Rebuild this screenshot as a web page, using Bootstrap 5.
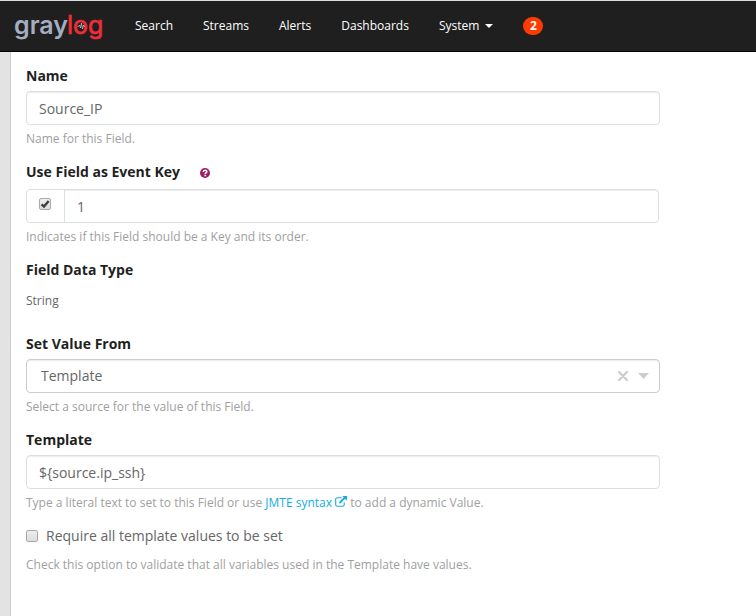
<!DOCTYPE html>
<html lang="en">
<head>
<meta charset="utf-8">
<meta name="viewport" content="width=device-width, initial-scale=1">
<title>Graylog - Event Definition Fields</title>
<link href="https://cdn.jsdelivr.net/npm/bootstrap@5.3.0/dist/css/bootstrap.min.css" rel="stylesheet">
<style>
body { font-family: "Open Sans", "Noto Sans", sans-serif; font-size: 12px; line-height: 18px; color: #666; background: #e3e3e3; }
.topbar { height: 52px; padding: 0 15px; background: #1f1f1f; border-top: 1px solid #d9dfdf; border-bottom: 1px solid #000; }
.topbar .navbar-nav { gap: 30px; margin-left: 30px; }
.topbar .navbar-nav .nav-link { padding: 0; color: #fff; font-size: 12px; line-height: 18px; }
.topbar .dropdown-toggle::after { margin-left: 6px; border-width: 4px 4px 0; vertical-align: 2px; }
.logo-text { font-family: Inter, sans-serif; font-size: 25px; }
.logo-gray { font-weight: 600; }
.logo-red { font-weight: 400; stroke-width: .7px; }
.alert-count { min-width: 20px; height: 18px; line-height: 18px; padding: 0; font-size: 12px; background: #ff3b00; margin-left: 30px; }
.panel { margin-left: 10px; padding: 14px 96px 15px 15px; border-left: 1px solid #ccc; }
.field { margin-bottom: 15px; }
.field-label { display: block; margin: 0 0 5px; font-size: 14px; line-height: 20px; font-weight: 700; color: #1f1f1f; }
.key-label { margin-bottom: 7px; gap: 20px; }
.help { margin: 5px 0 0; line-height: 17px; color: #a0a0a0; }
.help a { color: #16ace3; text-decoration: none; }
.field .form-control, .picker select { height: 34px; padding: 6px 12px; font-size: 14px; line-height: 20px; color: #666; border: 1px solid #dbe0e5; border-radius: 4px; box-shadow: inset 0 1px 1px rgba(0,0,0,.075); }
.picker select { width: 100%; appearance: none; padding: 6px 14px; background: #fff; border-color: #ccc; }
.picker-tools { top: 0; right: 11px; height: 34px; gap: 10px; color: #ccc; }
.picker-tools button { line-height: 0; color: inherit; }
.key-row { padding-right: 1px; }
.key-row .input-group-text { width: 39px; padding: 0 12px 4px; background: #fff; border: 1px solid #dbe0e5; border-radius: 4px; }
.key-row .form-control { border-radius: 0 4px 4px 0; }
.tick { appearance: none; flex: none; width: 12px; height: 12px; margin: 0; border: 1px solid #aaa; border-radius: 2px; background: linear-gradient(#eee, #dcdcdc); }
.tick:checked { background: url("data:image/svg+xml,%3Csvg xmlns='http://www.w3.org/2000/svg' viewBox='0 0 10 10'%3E%3Cpath d='M1.5 5.3 4 7.6 8.7 2' fill='none' stroke='%23404040' stroke-width='2.4'/%3E%3C/svg%3E") center / 10px no-repeat, linear-gradient(#eee, #dcdcdc); }
.type-value { margin: 12px 0 0; padding-bottom: 9px; }
.require-row { gap: 8px; font-size: 14px; line-height: 20px; }
.require-help { margin-top: 10px; }
</style>
</head>
<body class="d-flex flex-column min-vh-100">
<nav class="topbar navbar navbar-expand flex-nowrap" data-bs-theme="dark">
  <a href="#" class="d-block lh-1" aria-label="Graylog">
    <svg class="d-block overflow-visible" width="90" height="34" viewBox="0 0 90 34">
      <text class="logo-text logo-gray" x="-1" y="25" fill="#a5adc0">gray</text>
      <text class="logo-text logo-red" x="52" y="25" fill="#ef2d36" stroke="#ef2d36">log</text>
      <path d="M62.500 17.500h1l1-1.500 1 3 1-5 1 6 1-4 .6 1.500h.6" fill="none" stroke="#c8ccd6" stroke-width=".7"/>
    </svg>
  </a>
  <ul class="navbar-nav">
    <li class="nav-item"><a class="nav-link" href="#">Search</a></li>
    <li class="nav-item"><a class="nav-link" href="#">Streams</a></li>
    <li class="nav-item"><a class="nav-link" href="#">Alerts</a></li>
    <li class="nav-item"><a class="nav-link" href="#">Dashboards</a></li>
    <li class="nav-item dropdown"><a class="nav-link dropdown-toggle" href="#" role="button" data-bs-toggle="dropdown">System</a></li>
  </ul>
  <a href="#" class="alert-count badge rounded-pill text-white text-decoration-none fw-bold">2</a>
</nav>
<main class="panel bg-white flex-grow-1">
  <form>
    <div class="field">
      <label class="field-label" for="name">Name</label>
      <input class="form-control" id="name" type="text" value="Source_IP">
      <p class="help">Name for this Field.</p>
    </div>
    <div class="field">
      <div class="key-label d-flex align-items-center">
        <label class="field-label mb-0" for="key">Use Field as Event Key</label>
        <button type="button" class="btn p-0 border-0 lh-1" aria-label="Help">
          <svg class="d-block" width="10" height="11" viewBox="0 0 10 11"><circle cx="5" cy="6" r="5" fill="#9e1f63"/><path d="M3.300 4.900C3.300 2.700 6.800 2.700 6.800 4.700 6.800 5.800 5.200 5.800 5.200 7" fill="none" stroke="#fff" stroke-width="1.500"/><path d="M4.400 7.800H6v1.500H4.400z" fill="#fff"/></svg>
        </button>
      </div>
      <div class="key-row input-group">
        <span class="input-group-text"><input class="tick" type="checkbox" aria-label="Use as key" checked></span>
        <input class="form-control" id="key" type="text" value="1">
      </div>
      <p class="help">Indicates if this Field should be a Key and its order.</p>
    </div>
    <div class="field">
      <span class="field-label">Field Data Type</span>
      <p class="type-value">String</p>
    </div>
    <div class="field">
      <label class="field-label" for="source">Set Value From</label>
      <div class="picker position-relative">
        <select id="source"><option>Template</option></select>
        <div class="picker-tools position-absolute d-flex align-items-center">
          <button type="button" class="btn p-0 border-0" aria-label="Clear"><svg width="10" height="10" viewBox="0 0 10 10"><path d="M1 1l8 8M9 1 1 9" stroke="currentColor" stroke-width="2.200" stroke-linecap="round"/></svg></button>
          <svg width="11" height="6" viewBox="0 0 11 6"><path d="M0 0h11L5.500 6z" fill="currentColor"/></svg>
        </div>
      </div>
      <p class="help">Select a source for the value of this Field.</p>
    </div>
    <div class="field">
      <label class="field-label" for="template">Template</label>
      <input class="form-control" id="template" type="text" value="${source.ip_ssh}">
      <p class="help">Type a literal text to set to this Field or use <a href="#">JMTE syntax <svg class="align-baseline" width="12" height="11" viewBox="0 0 12 11"><path d="M6.500 1.700H2.200C1.300 1.700.7 2.300.7 3.200v5.500c0 .9.600 1.500 1.500 1.500h5.500c.9 0 1.500-.6 1.500-1.500V6.500" fill="none" stroke="currentColor" stroke-width="1.100"/><path d="M4.500 7 10 1.500" stroke="currentColor" stroke-width="1.800"/><path d="M7.300 0H12v4.700z" fill="currentColor"/></svg></a> to add a dynamic Value.</p>
    </div>
    <div class="field">
      <div class="require-row d-flex align-items-center">
        <input class="tick" id="require" type="checkbox">
        <label for="require">Require all template values to be set</label>
      </div>
      <p class="help require-help">Check this option to validate that all variables used in the Template have values.</p>
    </div>
  </form>
</main>
<script src="https://cdn.jsdelivr.net/npm/bootstrap@5.3.0/dist/js/bootstrap.bundle.min.js"></script>
</body>
</html>
